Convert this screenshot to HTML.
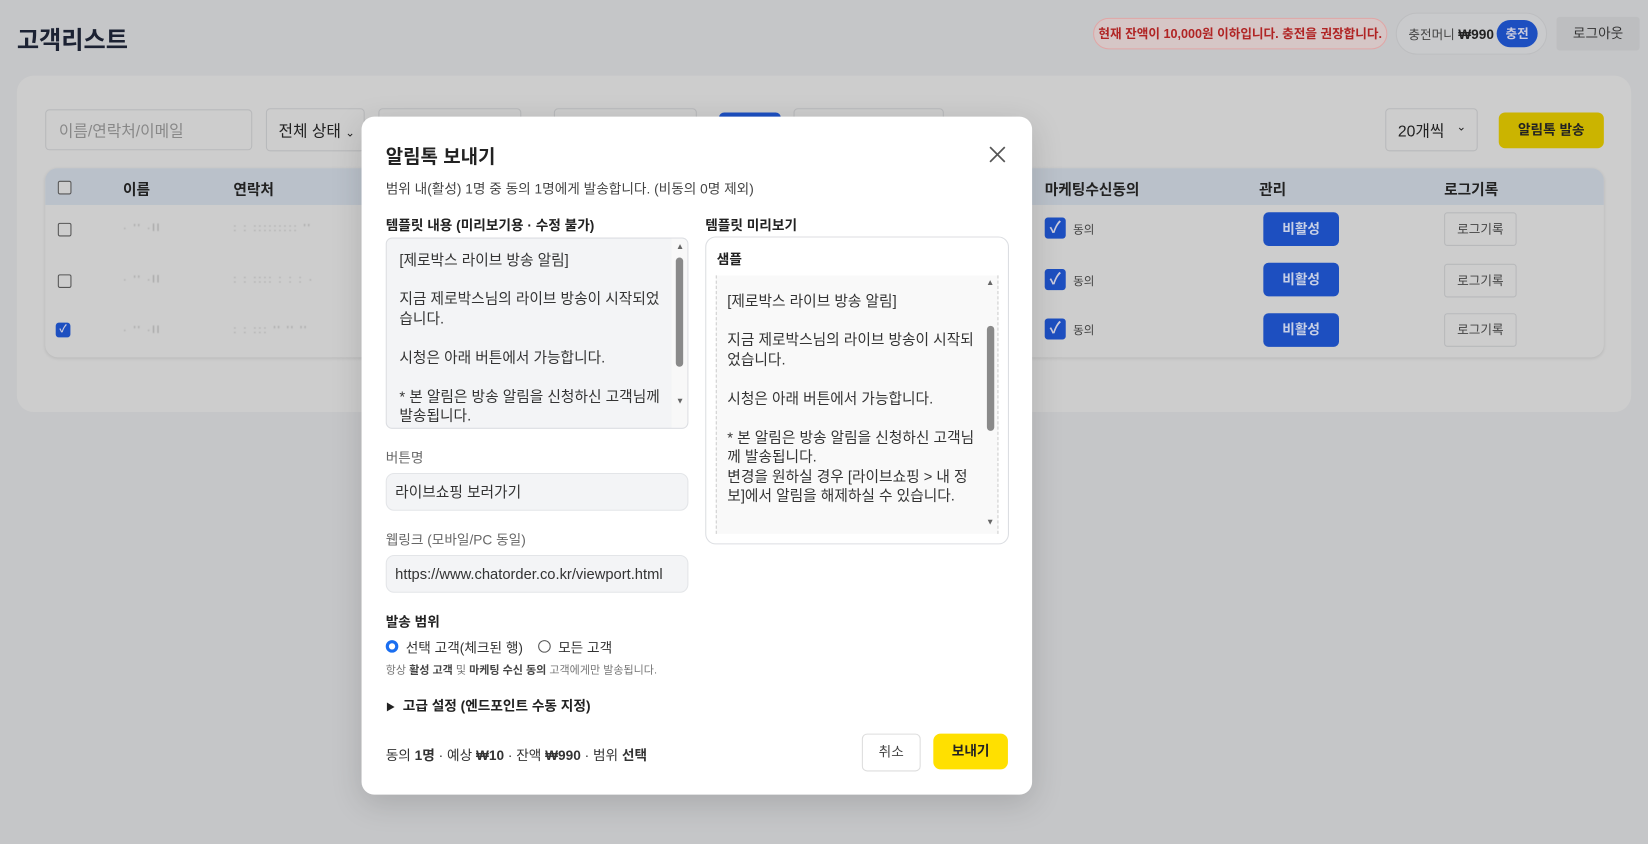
<!DOCTYPE html>
<html><head><meta charset="utf-8">
<style>
*{box-sizing:border-box;margin:0;padding:0}
html,body{width:1648px;height:844px;overflow:hidden;background:#c5c6c8;font-family:"Liberation Sans","Noto Sans CJK KR",sans-serif;color:#222}
#w{position:absolute;left:0;top:0;width:1568px;height:803px;transform:scale(1.05102);transform-origin:0 0}
.a{position:absolute}
.box{position:absolute;border:1px solid #b8b9bb;border-radius:4px;background:#cdcdcd;white-space:nowrap}
.t{font-size:12px;white-space:nowrap}
.blue{position:absolute;width:72px;height:32px;background:#1d4fc0;border-radius:5px;color:#c8d0e6;font-weight:bold;font-size:13px;text-align:center;line-height:32px}
.logb{position:absolute;width:69px;height:32px;border:1px solid #b8b9bb;border-radius:3px;color:#444;font-size:12px;text-align:center;line-height:30px}
.chk{position:absolute;width:13px;height:13px;border:1px solid #555;border-radius:2px;background:#cdcdcd}
.chkon{position:absolute;width:20px;height:20px;background:#1d4fc0;border-radius:3px;color:#ccd;font-size:15px;text-align:center;line-height:20px;font-weight:bold}
.blur{position:absolute;color:#999;font-size:10px;letter-spacing:2px;filter:blur(.6px)}
.m{position:absolute;left:344px;top:111px;width:638px;height:645px;background:#fff;border-radius:12px;box-shadow:0 8px 30px rgba(0,0,0,.15)}
.lbl{position:absolute;font-size:13px;font-weight:bold;color:#222;white-space:nowrap}
.gl{position:absolute;font-size:13px;color:#666;white-space:nowrap}
.inp{position:absolute;left:23px;width:288px;height:36px;background:#f3f4f6;border:1px solid #e3e5e8;border-radius:8px;font-size:14px;color:#333;padding:0 8px;line-height:34px;white-space:nowrap;overflow:hidden}
.txt{font-size:14px;line-height:18.5px;color:#333;white-space:pre-wrap}
</style></head><body><div id="w">
<div class="a" style="left:16px;top:19px;font-size:23px;font-weight:bold;color:#1c2233">고객리스트</div>
<div class="a" style="left:1040px;top:17px;width:280px;height:30px;border:1px solid #e0a6a6;border-radius:15px;background:#d6c6c6;color:#b02424;font-size:12px;font-weight:bold;text-align:center;line-height:28px">현재 잔액이 10,000원 이하입니다. 충전을 권장합니다.</div>
<div class="a" style="left:1328px;top:12px;width:144px;height:40px;border:1px solid #bdbec0;border-radius:20px;background:#c9cacc"></div>
<div class="a t" style="left:1340px;top:24px;color:#444">충전머니 <b style="color:#222;font-size:13px">₩990</b></div>
<div class="a" style="left:1424px;top:19px;width:39px;height:26px;border-radius:13px;background:#1d4fc0;color:#ccd;font-size:12px;font-weight:bold;text-align:center;line-height:26px">충전</div>
<div class="a" style="left:1481px;top:16px;width:79px;height:32px;background:#bdbec0;border-radius:3px;color:#333;font-size:13px;text-align:center;line-height:32px">로그아웃</div>

<div class="a" style="left:16px;top:72px;width:1536px;height:320px;background:#cdcdcd;border-radius:16px"></div>
<div class="box" style="left:43px;top:104px;width:197px;height:39px;color:#888;font-size:15px;padding:9px 12px">이름/연락처/이메일</div>
<div class="box" style="left:253px;top:103px;width:94px;height:41px;font-size:15px;color:#222;padding:10px 11px">전체 상태 <span style="font-size:11px">⌄</span></div>
<div class="box" style="left:360px;top:103px;width:136px;height:41px"></div>
<div class="box" style="left:527px;top:103px;width:136px;height:41px"></div>
<div class="a" style="left:684px;top:107px;width:59px;height:30px;background:#1d4fc0;border-radius:5px"></div>
<div class="box" style="left:755px;top:103px;width:143px;height:41px"></div>
<div class="box" style="left:1318px;top:103px;width:88px;height:41px;font-size:15px;color:#222;padding:10px 11px">20개씩 <span style="position:absolute;right:10px;font-size:11px">⌄</span></div>
<div class="a" style="left:1426px;top:107px;width:100px;height:34px;background:#cbb400;border-radius:6px;font-size:13px;font-weight:bold;color:#222;text-align:center;line-height:34px">알림톡 발송</div>

<div class="a" style="left:43px;top:160px;width:1483px;height:180px;border-radius:12px;background:#cdcdcd;box-shadow:0 1px 3px rgba(0,0,0,.1);overflow:hidden">
<div class="a" style="left:0;top:0;width:1483px;height:35px;background:#bac1ca"></div>
</div>
<div class="chk" style="left:55px;top:172px"></div>
<div class="a" style="left:117px;top:170px;font-size:14px;font-weight:bold">이름</div>
<div class="a" style="left:222px;top:170px;font-size:14px;font-weight:bold">연락처</div>
<div class="a" style="left:994px;top:170px;font-size:14px;font-weight:bold">마케팅수신동의</div>
<div class="a" style="left:1198px;top:170px;font-size:14px;font-weight:bold">관리</div>
<div class="a" style="left:1374px;top:170px;font-size:14px;font-weight:bold">로그기록</div>

<div class="chk" style="left:55px;top:212px"></div>
<div class="chk" style="left:55px;top:261px"></div>
<div class="chkon" style="left:53px;top:307px;width:14px;height:14px;font-size:10px;line-height:14px">✓</div>
<div class="blur" style="left:117px;top:212px">· '' ·ll</div><div class="blur" style="left:222px;top:212px">: : ::::::::: ''</div>
<div class="blur" style="left:117px;top:261px">· '' ·ll</div><div class="blur" style="left:222px;top:261px">: : :::: : : : ·</div>
<div class="blur" style="left:117px;top:309px">· '' ·ll</div><div class="blur" style="left:222px;top:309px">: : ::: '' '' ''</div>

<div class="chkon" style="left:994px;top:207px">✓</div><div class="a t" style="left:1021px;top:210px;color:#444;font-size:11px">동의</div>
<div class="chkon" style="left:994px;top:256px">✓</div><div class="a t" style="left:1021px;top:259px;color:#444;font-size:11px">동의</div>
<div class="chkon" style="left:994px;top:303px">✓</div><div class="a t" style="left:1021px;top:306px;color:#444;font-size:11px">동의</div>
<div class="blue" style="left:1202px;top:202px">비활성</div>
<div class="blue" style="left:1202px;top:250px">비활성</div>
<div class="blue" style="left:1202px;top:298px">비활성</div>
<div class="logb" style="left:1374px;top:202px">로그기록</div>
<div class="logb" style="left:1374px;top:251px">로그기록</div>
<div class="logb" style="left:1374px;top:298px">로그기록</div>

<div class="m">
<div class="a" style="left:23px;top:24px;font-size:18px;font-weight:bold;color:#222">알림톡 보내기</div>
<svg class="a" style="left:596px;top:27px" width="18" height="18" viewBox="0 0 18 18"><path d="M2 2L16 16M16 2L2 16" stroke="#555" stroke-width="1.6"/></svg>
<div class="gl" style="left:23px;top:58px;color:#444">범위 내(활성) 1명 중 동의 1명에게 발송합니다. (비동의 0명 제외)</div>
<div class="lbl" style="left:23px;top:93px">템플릿 내용 (미리보기용 · 수정 불가)</div>
<div class="lbl" style="left:327px;top:93px">템플릿 미리보기</div>
<div class="a" style="left:23px;top:115px;width:288px;height:182px;background:#f3f4f6;border:1px solid #dcdee2;border-radius:6px;overflow:hidden">
<div class="a txt" style="left:12px;top:11px;width:254px">[제로박스 라이브 방송 알림]

지금 제로박스님의 라이브 방송이 시작되었습니다.

시청은 아래 버튼에서 가능합니다.

* 본 알림은 방송 알림을 신청하신 고객님께 발송됩니다.</div>
<div class="a" style="right:0;top:0;width:15px;height:180px;background:#f8f8f8"></div>
<div class="a" style="right:4px;top:18px;width:7px;height:104px;background:#8a8a8a;border-radius:4px"></div>
<div class="a" style="right:3px;top:3px;font-size:8px;color:#666">▲</div>
<div class="a" style="right:3px;top:150px;font-size:8px;color:#666">▼</div>
</div>
<div class="gl" style="left:23px;top:314px">버튼명</div>
<div class="inp" style="top:339px">라이브쇼핑 보러가기</div>
<div class="gl" style="left:23px;top:392px">웹링크 (모바일/PC 동일)</div>
<div class="inp" style="top:417px">https://www.chatorder.co.kr/viewport.html</div>
<div class="lbl" style="left:23px;top:470px">발송 범위</div>
<div class="a" style="left:23px;top:498px;width:12px;height:12px;border-radius:50%;border:3px solid #1a6ef0;background:#fff"></div>
<div class="a t" style="left:42px;top:495px;font-size:13px;color:#333">선택 고객(체크된 행)</div>
<div class="a" style="left:168px;top:498px;width:12px;height:12px;border-radius:50%;border:1px solid #555"></div>
<div class="a t" style="left:187px;top:495px;font-size:13px;color:#333">모든 고객</div>
<div class="a t" style="left:23px;top:519px;font-size:10.5px;color:#777">항상 <b style="color:#444">활성 고객</b> 및 <b style="color:#444">마케팅 수신 동의</b> 고객에게만 발송됩니다.</div>
<div class="lbl" style="left:23px;top:550px"><span style="font-size:9px">▶</span>&nbsp; 고급 설정 (엔드포인트 수동 지정)</div>
<div class="a t" style="left:23px;top:597px;font-size:13px;color:#333">동의 <b>1명</b> · 예상 <b>₩10</b> · 잔액 <b>₩990</b> · 범위 <b>선택</b></div>
<div class="a" style="left:476px;top:587px;width:56px;height:36px;border:1px solid #ddd;border-radius:5px;font-size:13px;color:#444;text-align:center;line-height:34px">취소</div>
<div class="a" style="left:544px;top:587px;width:71px;height:34px;background:#ffe000;border-radius:7px;font-size:13px;font-weight:bold;color:#222;text-align:center;line-height:34px">보내기</div>

<div class="a" style="left:327px;top:114px;width:289px;height:293px;border:1px solid #dcdee2;border-radius:10px;background:#fff;overflow:hidden">
<div class="lbl" style="left:10px;top:10px">샘플</div>
<div class="a" style="left:9px;top:36px;width:269px;height:246px;background:#f9f9f9;border-left:1px dashed #ccc;border-right:1px dashed #ccc">
<div class="a txt" style="left:10px;top:15px;width:236px">[제로박스 라이브 방송 알림]

지금 제로박스님의 라이브 방송이 시작되었습니다.

시청은 아래 버튼에서 가능합니다.

* 본 알림은 방송 알림을 신청하신 고객님께 발송됩니다.
변경을 원하실 경우 [라이브쇼핑 &gt; 내 정보]에서 알림을 해제하실 수 있습니다.</div>
<div class="a" style="right:3px;top:48px;width:7px;height:100px;background:#8a8a8a;border-radius:4px"></div>
<div class="a" style="right:3px;top:2px;font-size:8px;color:#666">▲</div>
<div class="a" style="right:3px;top:230px;font-size:8px;color:#666">▼</div>
</div>
</div>
</div>
</div></body></html>
